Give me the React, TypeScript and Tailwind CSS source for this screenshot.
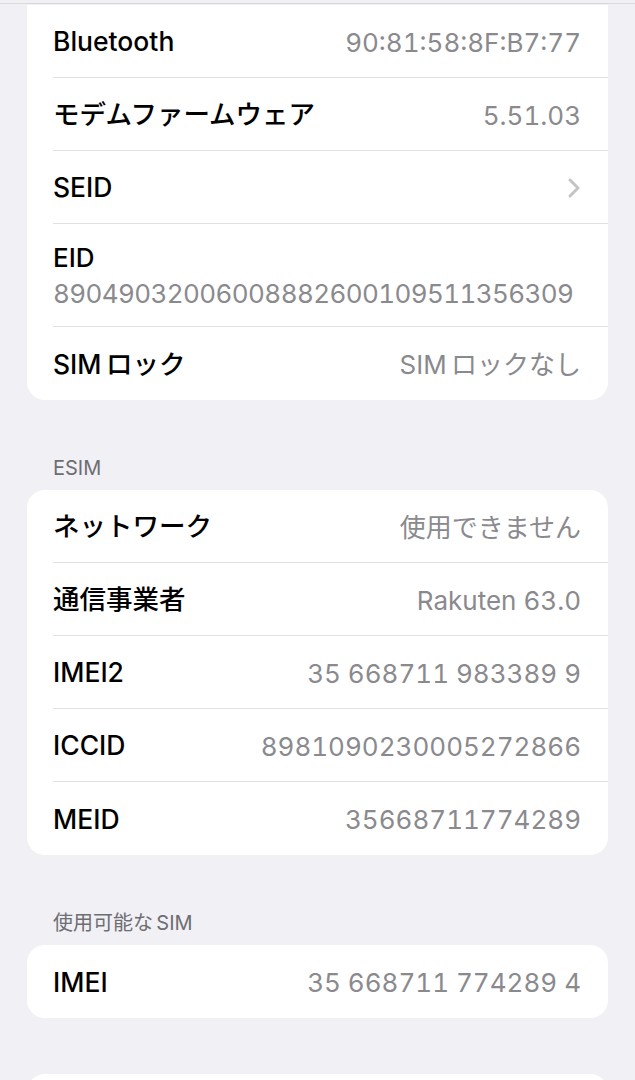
const font = { fontFamily: 'Inter, "Noto Sans CJK JP", sans-serif' }

type Item = { label: string; value?: string; chevron?: boolean; stacked?: boolean }

const top: Item[] = [
  { label: "Bluetooth", value: "90:81:58:8F:B7:77" },
  { label: "モデムファームウェア", value: "5.51.03" },
  { label: "SEID", chevron: true },
  { label: "EID", value: "89049032006008882600109511356309", stacked: true },
  { label: "SIM\u2006ロック", value: "SIM\u2006ロックなし" },
]

const esim: Item[] = [
  { label: "ネットワーク", value: "使用できません" },
  { label: "通信事業者", value: "Rakuten 63.0" },
  { label: "IMEI2", value: "35 668711 983389 9" },
  { label: "ICCID", value: "8981090230005272866" },
  { label: "MEID", value: "35668711774289" },
]

const sims: Item[] = [{ label: "IMEI", value: "35 668711 774289 4" }]

function Chevron() {
  return (
    <svg width="14" height="22" viewBox="0 0 14 22" fill="none">
      <path d="M3 3l8 8-8 8" stroke="#c4c4c7" strokeWidth="3" strokeLinecap="round" strokeLinejoin="round" />
    </svg>
  )
}

function Row({ item, last }: { item: Item; last: boolean }) {
  const border = last ? "" : "border-b border-[#e1e1e4]"
  if (item.stacked) {
    return (
      <div className="pl-[26px]">
        <div className={`flex h-[103px] flex-col justify-center pt-[2px] pr-[27px] ${border}`}>
          <div className="text-[26px] font-medium leading-[34px] text-black">{item.label}</div>
          <div className="mt-[2px] text-[26px] leading-[34px] tabular-nums tracking-[-0.6px] text-[#8a8a8e]">{item.value}</div>
        </div>
      </div>
    )
  }
  return (
    <div className="pl-[26px]">
      <div className={`flex h-[73px] items-center justify-between pt-[2px] pr-[27px] ${border}`}>
        <span className="text-[26.5px] font-medium text-black">{item.label}</span>
        {item.chevron ? (
          <Chevron />
        ) : (
          <span className="text-[26px] tabular-nums text-[#8a8a8e]">{item.value}</span>
        )}
      </div>
    </div>
  )
}

function Card({ items, className }: { items: Item[]; className: string }) {
  return (
    <div className={`mx-[27px] bg-white ${className}`}>
      {items.map((it, i) => (
        <Row key={it.label} item={it} last={i === items.length - 1} />
      ))}
    </div>
  )
}

function Header({ title }: { title: string }) {
  return (
    <div className="flex h-[90px] items-end px-[53px] pb-[11px]">
      <span className="text-[20px] leading-[22px] text-[#6d6d72]">{title}</span>
    </div>
  )
}

export default function App() {
  return (
    <div className="h-[1080px] w-[635px] overflow-hidden bg-[#f1f0f5]" style={font}>
      <div className="h-[3px]" />
      <div className="h-[1px] bg-[#d9d9dd]" />
      <div className="h-[1px]" />
      <Card items={top} className="rounded-b-[18px]" />
      <Header title="ESIM" />
      <Card items={esim} className="rounded-[18px]" />
      <Header title={"使用可能な\u2006SIM"} />
      <Card items={sims} className="rounded-[18px]" />
      <div className="mx-[27px] mt-[56px] h-[40px] rounded-t-[18px] bg-white" />
    </div>
  )
}
